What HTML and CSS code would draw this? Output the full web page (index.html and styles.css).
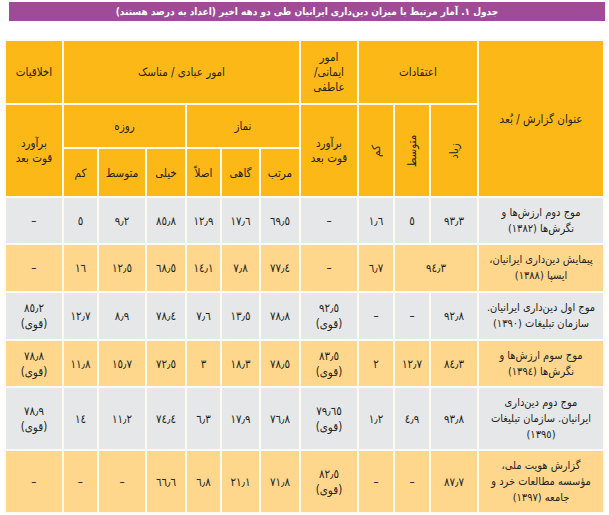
FILE: index.html
```html
<!DOCTYPE html>
<html lang="fa" dir="rtl">
<head>
<meta charset="utf-8">
<link rel="stylesheet" href="styles.css">
</head>
<body>
<div class="title">جدول ١. آمار مرتبط با میزان دین‌داری ایرانیان طی دو دهه اخیر (اعداد به درصد هستند)</div>
<table class="grid">
  <colgroup>
    <col class="c-title"><col class="c46"><col class="c34"><col class="c34"><col class="c56">
    <col class="c38"><col class="c37"><col class="c33"><col class="c38"><col class="c46"><col class="c33"><col class="c56">
  </colgroup>
  <thead>
    <tr class="h1">
      <th rowspan="3">عنوان گزارش / بُعد</th>
      <th colspan="3">اعتقادات</th>
      <th class="tight">امور<br>ایمانی/<br>عاطفی</th>
      <th colspan="6">امور عبادی / مناسک</th>
      <th>اخلاقیات</th>
    </tr>
    <tr class="h2">
      <th rowspan="2"><span class="v">زیاد</span></th>
      <th rowspan="2"><span class="v">متوسط</span></th>
      <th rowspan="2"><span class="v">کم</span></th>
      <th rowspan="2" class="tight">برآورد<br>قوت بعد</th>
      <th colspan="3">نماز</th>
      <th colspan="3">روزه</th>
      <th rowspan="2" class="tight">برآورد<br>قوت بعد</th>
    </tr>
    <tr class="h3">
      <th>مرتب</th><th>گاهی</th><th>اصلاً</th><th>خیلی</th><th>متوسط</th><th>کم</th>
    </tr>
  </thead>
  <tbody>
    <tr class="gray r45">
      <td class="name">موج دوم ارزش‌ها و<br>نگرش‌ها (١٣٨٢)</td>
      <td>٩٣٫٣</td><td>٥</td><td>١٫٦</td><td>–</td>
      <td>٦٩٫٥</td><td>١٧٫٦</td><td>١٢٫٩</td><td>٨٥٫٨</td><td>٩٫٢</td><td>٥</td><td>–</td>
    </tr>
    <tr class="light r46">
      <td class="name">پیمایش دین‌داری ایرانیان،<br>ایسپا (١٣٨٨)</td>
      <td colspan="2">٩٤٫٣</td><td>٦٫٧</td><td>–</td>
      <td>٧٧٫٤</td><td>٧٫٨</td><td>١٤٫١</td><td>٦٨٫٥</td><td>١٢٫٥</td><td>١٦</td><td>–</td>
    </tr>
    <tr class="gray r46">
      <td class="name">موج اول دین‌داری ایرانیان.<br>سازمان تبلیغات (١٣٩٠)</td>
      <td>٩٢٫٨</td><td>–</td><td>–</td><td>٩٢٫٥<br>(قوی)</td>
      <td>٧٨٫٨</td><td>١٣٫٥</td><td>٧٫٦</td><td>٧٨٫٤</td><td>٨٫٩</td><td>١٢٫٧</td><td>٨٥٫٢<br>(قوی)</td>
    </tr>
    <tr class="light r45">
      <td class="name">موج سوم ارزش‌ها و<br>نگرش‌ها (١٣٩٤)</td>
      <td>٨٤٫٣</td><td>١٢٫٧</td><td>٢</td><td>٨٣٫٥<br>(قوی)</td>
      <td>٧٨٫٥</td><td>١٨٫٣</td><td>٣</td><td>٧٢٫٥</td><td>١٥٫٧</td><td>١١٫٨</td><td>٧٨٫٨<br>(قوی)</td>
    </tr>
    <tr class="gray r61">
      <td class="name">موج دوم دین‌داری<br>ایرانیان. سازمان تبلیغات<br>(١٣٩٥)</td>
      <td>٩٣٫٨</td><td>٤٫٩</td><td>١٫٢</td><td>٧٩٫٦٥<br>(قوی)</td>
      <td>٧٦٫٨</td><td>١٧٫٩</td><td>٦٫٣</td><td>٧٤٫٤</td><td>١١٫٢</td><td>١٤</td><td>٧٨٫٩<br>(قوی)</td>
    </tr>
    <tr class="light r61">
      <td class="name">گزارش هویت ملی،<br>مؤسسه مطالعات خرد و<br>جامعه (١٣٩٧)</td>
      <td>٨٧٫٧</td><td>–</td><td>–</td><td>٨٢٫٥<br>(قوی)</td>
      <td>٧١٫٨</td><td>٢١٫١</td><td>٦٫٨</td><td>٦٦٫٦</td><td>–</td><td>–</td><td>–</td>
    </tr>
  </tbody>
</table>
</body>
</html>
```
FILE: styles.css
```css
html, body {
  margin: 0;
  padding: 0;
  background: #ffffff;
}
body {
  padding-top: 2px;
  font-family: "DejaVu Sans Condensed", "DejaVu Sans", sans-serif;
  color: #231f20;
}
.title {
  margin: 0 4px 0 9px;
  height: 19px;
  line-height: 19px;
  background: #9f4b97;
  color: #ffffff;
  font-weight: bold;
  font-size: 10px;
  text-align: center;
  white-space: nowrap;
  overflow: hidden;
}
.grid {
  margin: 18px 4px 0 auto;
  border-collapse: separate;
  border-spacing: 2px;
  table-layout: fixed;
  width: 601px;
  background: #fdfaf2;
  font-size: 11.5px;
}
.c-title { width: 124px; }
.c56 { width: 56px; }
.c46 { width: 46px; }
.c38 { width: 38px; }
.c37 { width: 37px; }
.c34 { width: 34px; }
.c33 { width: 33px; }
.grid th, .grid td {
  padding: 0;
  text-align: center;
  vertical-align: middle;
  font-weight: normal;
  line-height: 16px;
  white-space: nowrap;
  overflow: hidden;
}
.grid td.name {
  font-size: 11px;
}
.grid th {
  background: #fcb817;
}
.grid th.tight {
  line-height: 15px;
}
.h1 { height: 62px; }
.h2 { height: 42px; }
.h3 { height: 47px; }
.r45 { height: 45px; }
.r46 { height: 46px; }
.r61 { height: 61px; }
.gray td { background: #e6e7e8; }
.light td { background: #fed78d; }
.v {
  display: inline-block;
  transform: rotate(-90deg);
  white-space: nowrap;
}
```
